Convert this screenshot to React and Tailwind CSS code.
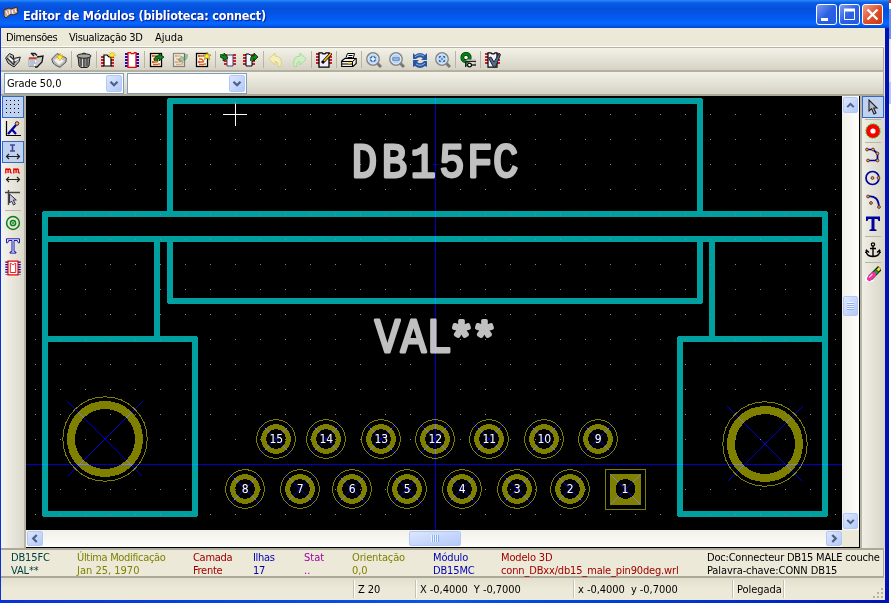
import React from "react";

const OLIVE = "#808000";
const TEAL = "#00a0a0";
const BLUE = "#0000c8";

/* ---------- icon pieces ---------- */

function Icon({ children, size = 16, className = "" }) {
  return (
    <svg width={size} height={size} viewBox="0 0 16 16" fill="none" className={`shrink-0 ${className}`}>
      {children}
    </svg>
  );
}

const RedPins = ({ x1 = 0, x2 = 13, y = 5 }) => (
  <g fill="#d02028" shapeRendering="crispEdges">
    {[0, 3, 6, 9].map((d) => (
      <React.Fragment key={d}>
        <rect x={x1} y={y + d} width="3" height="2" />
        <rect x={x2} y={y + d} width="3" height="2" />
      </React.Fragment>
    ))}
  </g>
);

const Star = ({ x = 12, y = 4 }) => (
  <g>
    <path d={`M${x - 4} ${y}h8M${x} ${y - 4}v8M${x - 2.5} ${y - 2.5}l5 5M${x + 2.5} ${y - 2.5}l-5 5`} stroke="#e0b000" />
    <circle cx={x} cy={y} r="1.8" fill="#ffee20" />
  </g>
);

const Board = ({ faded, star }) => (
  <g opacity={faded ? 0.4 : 1}>
    <rect x="1.5" y="1.5" width="11" height="13" fill="#fff" stroke="#000" strokeWidth="1.3" />
    <path d="M4 4h5M4 7h2.5l1.5 1.5M4 10h4l1-1.5M4 12.5h5M10 11v2" stroke="#e06018" strokeWidth="1.4" />
    <circle cx="4" cy="4" r="1.2" fill="#e06018" />
    <circle cx="4" cy="10" r="1.2" fill="#e06018" />
    {star && <path d="M12 .3l1.200 2.700h2.700l-2 1.800l.8 2.900L12 6.100L9.300 7.700l.8-2.900l-2-1.800h2.700z" fill="#ffee20" stroke="#806000" strokeWidth=".6" />}
  </g>
);

const GreenArrow = ({ d, head }) => (
  <g>
    <path d={d} stroke="#002800" strokeWidth="3.6" />
    <path d={head} fill="#0a8a1c" stroke="#002800" strokeWidth=".8" />
    <path d={d} stroke="#0a8a1c" strokeWidth="2.2" />
  </g>
);

const Lens = ({ children }) => (
  <>
    <path d="M11.5 11.5L15 15" stroke="#777" strokeWidth="3" />
    <circle cx="7" cy="7" r="6.2" fill="#c2dcf4" stroke="#888" strokeWidth="1.5" />
    <circle cx="7" cy="7" r="4.9" fill="#b8d5f2" stroke="#e8f4ff" strokeWidth=".7" />
    {children}
  </>
);

const topIcons = [
  [
    <>
      <path d="M.7 6L4.500 1.500L8.500 3.500V6.500L15.300 5L14 9.500L9 15L3 11Z" fill="#c4c4c4" stroke="#1c1c1c" />
      <path d="M2 6l7 7M5 4l4 4v5M9 11l4-4" stroke="#333" strokeWidth="1.2" />
      <path d="M4 6l4 3M10 9l3-2" stroke="#fff" strokeWidth="1.5" />
    </>,
    <>
      <path d="M3 1.5h4l2 2M3 1L6 4" stroke="#222" strokeWidth="1.5" />
      <path d="M1 5.5h8v9H1z" fill="#fff" stroke="#999" />
      <path d="M1 6.5h8" stroke="#c84030" strokeWidth="2" />
      <path d="M2 9h5M2 11h6M2 13h4" stroke="#6688bb" />
      <path d="M9 5l6-1l-1 6l-5 5h-2" fill="#ccc" stroke="#111" strokeWidth="1.3" />
    </>,
    <>
      <path d="M.7 7L6 1.500L9 3L15.300 6L15 10L9 15.300L5 13.500L2 11Z" fill="#bbb" stroke="#555" />
      <path d="M3 8l5-3l5 4l-5 4z" fill="#f2f2f2" />
      <Star x={9} y={5} />
    </>,
  ],
  [
    <>
      <path d="M2 4h12l-1 10l-2 1.500H5L3 14z" fill="#888" stroke="#222" />
      <path d="M5 6v8M8 6v9M11 6v8" stroke="#333" />
      <path d="M6.5 6v9" stroke="#d8d8d0" />
      <ellipse cx="8" cy="4" rx="7" ry="2.2" fill="#a8a8a0" stroke="#222" />
      <path d="M6 2q2-2 4 0" stroke="#222" />
    </>,
  ],
  [
    <>
      <RedPins x1={0} x2={10} y={4} />
      <path d="M3 3h3l2 2h2v9H3z" fill="#fff" stroke="#000" strokeWidth="1.2" />
      <Star x={11} y={3} />
    </>,
    <>
      <g fill="#1010c0" shapeRendering="crispEdges">
        {[1, 4, 7, 10, 13].map((y) => (
          <React.Fragment key={y}>
            <rect x="1" y={y} width="3" height="2" />
            <rect x="12" y={y} width="3" height="2" />
          </React.Fragment>
        ))}
      </g>
      <path d="M4 .7h2.5l1 1h2l1-1H12v14.6H4z" fill="#fff" stroke="#f00000" strokeWidth="1.3" />
    </>,
  ],
  [
    <>
      <Board />
      <GreenArrow d="M7 9V7q0-2 4-2" head="M10 2l5 3l-5 4z" />
    </>,
    <>
      <Board faded />
      <g opacity=".35"><GreenArrow d="M14 2v2q0 3-4 3" head="M10 4l-4 4l5 3z" /></g>
    </>,
    <Board star />,
  ],
  [
    <>
      <RedPins x1={4} x2={13} y={2} />
      <path d="M7 3h6v11H7z" fill="#f3f2ff" stroke="#446" />
      <GreenArrow d="M1 2v1q0 2 4 2" head="M4 1l4 5l-5 3z" />
    </>,
    <>
      <RedPins x1={0} x2={9} y={2} />
      <path d="M3 2h3l1 1h2v11H3z" fill="#f3f2ff" stroke="#000" />
      <GreenArrow d="M9 9V7q0-2 3-2" head="M11 1l4 4l-4 4z" />
    </>,
  ],
  [
    <path d="M.7 7L7 1v3q8 0 6 10.500h-3q1-5-3-5V13z" fill="#f6eeb4" stroke="#dccf88" />,
    <path d="M15.300 7L9 1v3q-8 0-6 10.500h3q-1-5 3-5V13z" fill="#cfeec4" stroke="#a8d8a0" />,
  ],
  [
    <>
      <RedPins y={1} />
      <path d="M3 .8h3l1 1h2l1-1h3v14.4H3z" fill="#eeeeff" stroke="#000" strokeWidth="1.3" />
      <path d="M15 1.500L8 9l-2 2" stroke="#000" strokeWidth="3" />
      <path d="M15 1.500L8 9" stroke="#f8b820" strokeWidth="1.8" />
    </>,
  ],
  [
    <>
      <path d="M4.500 7l2-5.500h7L12 7" fill="#fff" stroke="#000" />
      <path d="M7.500 3.500h4M6.500 5.500h5" stroke="#000" />
      <path d="M.7 9l3-2.500h11.500v5L12 14.500H.7z" fill="#eeeee6" stroke="#000" strokeWidth="1.1" />
      <path d="M1 9.500h10.500l3.500-3M1 12h10.500M11.500 9.500v5" stroke="#000" />
      <path d="M7 10.800h3" stroke="#ffe010" strokeWidth="1.6" />
    </>,
  ],
  [
    <Lens><path d="M7 4v6M4 7h6" stroke="#3264a8" strokeWidth="3.400" /><path d="M7 4.500v5M4.500 7h5" stroke="#fff" strokeWidth="1.500" /></Lens>,
    <Lens><path d="M3.5 7h7" stroke="#3264a8" strokeWidth="3" /><path d="M4.2 7h5.6" stroke="#fff" /></Lens>,
    <>
      <path d="M1 7V1l2 2q5-4 10 0l2-2v7H9l2-2Q7 4 4 7zM15 9v6l-2-1q-5 4-10 0l-2 1V8h6l-2 2q4 3 7-1z" fill="#2856a4" />
      <path d="M3 5q4-4 9-1M13 11q-4 4-9 1" stroke="#8fb8e8" />
    </>,
    <Lens><path d="M4.500 6V4.500H6M9.500 6V4.500H8M4.500 8V9.500H6M9.500 8V9.500H8" stroke="#3f70b0" strokeWidth="1.2" /><path d="M5.500 5.500l3 3M8.500 5.500l-3 3" stroke="#6d98cc" /></Lens>,
  ],
  [
    <>
      <circle cx="6" cy="5.5" r="3.7" fill="#fff" stroke="#003800" strokeWidth="3.8" />
      <circle cx="6" cy="5.5" r="3.7" stroke="#088018" strokeWidth="2.4" />
      <path d="M6 10.500v4" stroke="#088018" strokeWidth="2" />
      <path d="M6.5 8.5h9v5" stroke="#b8b8b8" strokeWidth="2" />
      <path d="M5.5 15V9.5H16" stroke="#222" />
      <path d="M11 13h5" stroke="#000" strokeWidth="1.2" />
      <circle cx="9.5" cy="13" r="1.9" fill="#fff" stroke="#000" strokeWidth="1.2" />
    </>,
  ],
  [
    <>
      <RedPins y={1} x2={12} />
      <path d="M3 .8h3l1 1h2l1-1h2v14.4H3z" fill="#f3f2ff" stroke="#000" strokeWidth="1.2" />
      <path d="M3.500 6l2.500-1l3 5l5-8.500l1.500 1l-5 12.500H8.500z" fill="#506c88" stroke="#202838" />
    </>,
  ],
];

const DoubleArrow = () => <path d="M1.500 12.5h13M4 10l-2.500 2.500L4 15M12 10l2.500 2.500L12 15" stroke="#222" strokeWidth="1.2" />;
const Joint = ({ x, y }) => <circle cx={x} cy={y} r="1.4" fill="#e8a070" stroke="#502010" strokeWidth=".8" />;

const leftIcons = {
  grid: (
    <g fill="#000" shapeRendering="crispEdges">
      {[1, 5, 9, 13].map((y) => [0, 4, 8, 12].map((x) => <rect key={`${x}-${y}`} x={x + 1} y={y} width="1" height="1" />))}
    </g>
  ),
  polar: (
    <>
      <path d="M1.5 0v14.5H16" stroke="#000" strokeWidth="1.2" />
      <path d="M3 13L11 4M7 8.500l4 4.500" stroke="#0000a0" strokeWidth="2.2" />
      <circle cx="12" cy="2.5" r="1.800" fill="#e8b890" stroke="#502010" />
    </>
  ),
  inch: (
    <>
      <path d="M5 1h5M5 7h5M7.5 1v6" stroke="#4048a0" strokeWidth="1.6" />
      <DoubleArrow />
    </>
  ),
  mm: (
    <>
      <path d="M.8 6.500V1.500M.8 2.800q1.200-1.600 2.300 0V6M3.100 2.800q1.200-1.600 2.300 0V5.500l1.300.8M8.800 6.500V1.500M8.800 2.800q1.200-1.600 2.300 0V6M11.100 2.800q1.200-1.600 2.300 0V5.500l1.500.8" stroke="#e80000" strokeWidth="1.300" />
      <DoubleArrow />
    </>
  ),
  cursor: (
    <>
      <path d="M0 2.5h15M3.5 0v15" stroke="#444" strokeWidth="1.4" />
      <path d="M4.500 4v9l2-2l2 4l1.800-1l-2-4h3z" fill="#c8c8dc" stroke="#223" strokeWidth=".9" />
    </>
  ),
  pad: (
    <g stroke="#088018">
      <circle cx="8" cy="8" r="6.4" strokeWidth="1.5" />
      <circle cx="8" cy="8" r="2.6" strokeWidth="1.5" />
      <circle cx="8" cy="8" r=".6" />
    </g>
  ),
  text: <path d="M1.500.800h13v4h-1.200l-1-2.300H9v11l2 .6v1H5v-1l2-.6v-11H3.700l-1 2.300H1.500z" fill="#f0f2ff" stroke="#0000a0" strokeWidth=".9" />,
  module: (
    <>
      <path d="M2 1.500v13M14 1.500v13" stroke="#0000b0" strokeWidth="3.400" strokeDasharray="1.2 1.3" />
      <path d="M3 1.2h10v13.6H3z" fill="#fff" stroke="#f00000" strokeWidth="1.2" />
      <path d="M5.300 3.500h1l1 1h1.400l1-1h1v9H5.300z" stroke="#f00000" strokeWidth=".9" />
    </>
  ),
};

const rightIcons = {
  arrow: <path d="M4 1v11l2.6-2.3L9 15l2-1l-2.3-5H12z" fill="#b8bcd0" stroke="#222" strokeWidth="1.1" />,
  pad: (
    <>
      <circle cx="8" cy="8" r="4.8" fill="#fff" stroke="#f80000" strokeWidth="4.4" />
      <circle cx="8" cy="8" r="7.2" stroke="#00d000" strokeDasharray="1.6 1.2" />
    </>
  ),
  line: (
    <>
      <path d="M2 2.500h6l4.500 4v5.500l-2 1.500H3" stroke="#0000a0" strokeWidth="1.7" />
      <Joint x={2} y={2.5} /><Joint x={8} y={2.5} /><Joint x={12.5} y={6.5} /><Joint x={12.5} y={13.5} /><Joint x={3} y={13.5} />
    </>
  ),
  circle: (
    <>
      <circle cx="7.5" cy="8" r="6.5" stroke="#0000a0" strokeWidth="1.7" />
      <Joint x={7.5} y={8} /><Joint x={13.5} y={8} />
    </>
  ),
  arc: (
    <>
      <path d="M3 3.500q10-1.500 11 10" stroke="#0000a0" strokeWidth="1.8" />
      <Joint x={3} y={3.5} /><Joint x={6} y={10} /><Joint x={14} y={14} />
    </>
  ),
  text: <path d="M1 .5h14V5h-1.5l-1-2h-3v10l2 .7V15h-7v-1.3l2-.7V3h-3l-1 2H1z" fill="#0000a0" />,
  anchor: (
    <>
      <circle cx="8" cy="2.4" r="1.6" stroke="#000" strokeWidth="1.3" />
      <path d="M8 4v10.5M5 6.5h6M1 8.5q.5 6 7 6t7-6M.5 11l1-2.7L4 10.5M15.5 11l-1-2.7L12 10.5" stroke="#000" strokeWidth="1.4" />
    </>
  ),
  eraser: (
    <>
      <path d="M0 12l3-3l6 6l-4 1l-5-1z" fill="#fff" />
      <path d="M15 2L5 12" stroke="#111" strokeWidth="5.400" />
      <path d="M15 2L12.500 4.500" stroke="#e8e020" strokeWidth="3" />
      <path d="M12.200 4.800L9.200 7.800" stroke="#18a030" strokeWidth="3.8" />
      <path d="M8.500 8.500L4.500 12.500" stroke="#f030a0" strokeWidth="5" strokeLinecap="round" />
      <path d="M7.500 8l-3.500 3.500" stroke="#ffc0e4" strokeWidth="1.2" />
    </>
  ),
};

function SideButton({ icon, active, tall }) {
  return (
    <div
      className={`flex h-[22px] w-[22px] shrink-0 items-center justify-center ${
        active ? "border border-[#316ac5] bg-[#c1d2ee]" : ""
      } ${tall ? "mb-px" : ""}`}
    >
      <Icon>{icon}</Icon>
    </div>
  );
}

const SideSep = () => <div className="mx-[3px] h-px shrink-0 bg-[#b8b5a6]" />;

/* ---------- small controls ---------- */

function Chevron({ dir }) {
  const d = { down: "M4 6l4 4l4-4", up: "M4 10l4-4l4 4", left: "M10 4l-4 4l4 4", right: "M6 4l4 4l-4 4" }[dir];
  return (
    <svg width="15" height="15" viewBox="0 0 16 16" fill="none">
      <path d={d} stroke="#4d6185" strokeWidth="2.6" />
    </svg>
  );
}

const xpButton =
  "flex shrink-0 items-center justify-center rounded-[2px] border border-[#b4c8f6] bg-linear-to-br from-[#dce7ff] to-[#b4c9f8]";

function Combo({ value }) {
  return (
    <div className="flex h-[21px] w-[120px] items-center justify-between border border-[#7f9db9] bg-white pr-px pl-[2px]">
      <span className="text-[11px] tracking-[-0.1px]">{value}</span>
      <div className={`${xpButton} h-[17px] w-[16px]`}>
        <Chevron dir="down" />
      </div>
    </div>
  );
}

function CaptionButton({ red, children }) {
  return (
    <div
      className={`flex h-[21px] w-[21px] items-center justify-center rounded-[3px] border border-white ${
        red ? "bg-linear-to-br from-[#f0a088] via-[#e0502c] to-[#c83810]" : "bg-linear-to-br from-[#7c9cf4] via-[#2c60e4] to-[#2458e0]"
      }`}
    >
      <svg width="19" height="19" viewBox="0 0 19 19" fill="none" stroke="#fff">
        {children}
      </svg>
    </div>
  );
}

/* ---------- drawing area ---------- */

const holes = [
  [105, 439],
  [765, 444],
];
const pads = [
  [276, 439, "15"], [326, 439, "14"], [381, 439, "13"], [435, 439, "12"], [489, 439, "11"], [544, 439, "10"], [598, 439, "9"],
  [245, 489, "8"], [300, 489, "7"], [352, 489, "6"], [407, 489, "5"], [462, 489, "4"], [517, 489, "3"], [570, 489, "2"],
];

const cross = (x, y, r) => `M${x - r} ${y - r}L${x + r} ${y + r}M${x + r} ${y - r}L${x - r} ${y + r}`;

function Footprint() {
  const dots = [];
  for (let y = 114; y < 530; y += 25) {
    for (let x = 35; x < 842; x += 25) {
      if (x !== 435 && y !== 464) dots.push(`M${x} ${y}h1v1h-1z`);
    }
  }
  return (
    <svg width="816" height="434" viewBox="26 96 816 434" className="block shrink-0 bg-black" fill="none">
      <g shapeRendering="crispEdges">
        <path
          d="M170 214V101H700V214M45 214H825V514H680V339H825M45 214V514H195V339H45M45 239H825M170 239V301H700V239M157 239V339M712 239V339"
          stroke={TEAL}
          strokeWidth="6"
          strokeLinejoin="round"
          strokeLinecap="round"
        />
        {holes.map(([x, y]) => (
          <g key={x} stroke={OLIVE}>
            <circle cx={x} cy={y} r="34" strokeWidth="8" />
            <circle cx={x} cy={y} r="42.2" />
          </g>
        ))}
        {pads.map(([x, y, n]) => (
          <g key={n} stroke={OLIVE}>
            <circle cx={x} cy={y} r="12.4" strokeWidth="5" />
            <circle cx={x} cy={y} r="19.3" />
          </g>
        ))}
        <rect x="605.5" y="469.5" width="40" height="40" stroke={OLIVE} />
        <rect x="610" y="474" width="31" height="31" fill={OLIVE} />
        <circle cx="625.5" cy="489" r="10" fill="#000" />
        <path d={dots.join("")} fill="#848484" />
      </g>

      <g fill="#c0c0c0" stroke="#c0c0c0" strokeLinejoin="round" fontFamily="'Liberation Mono', monospace">
        <g transform="scale(.88 1)" fontSize="48" strokeWidth="2.8">
          <text x="399.8 433.9 466.6 499.2 531 560.2" y="177.400">DB15FC</text>
          <text x="425.9 455.5 484.8" y="352.300">VAL</text>
        </g>
        <text x="453.2 476.2" y="350" fontSize="42" strokeWidth="4" fontFamily="'Liberation Sans', sans-serif">**</text>
      </g>

      <g stroke={BLUE} shapeRendering="crispEdges" className="mix-blend-screen">
        <path d="M26 464.5H842M435.5 97V530" />
        <path d="M433 164.5h5" />
        {holes.map(([x, y]) => (
          <path key={x} d={cross(x, y, 37.5)} />
        ))}
        {pads.map(([x, y, n]) => (
          <path key={n} d={cross(x, y, 15)} />
        ))}
        <path d={cross(625.5, 489.5, 15)} />
      </g>

      <g fill="#fff" fontFamily="'DejaVu Sans', sans-serif" fontSize="12" textAnchor="middle">
        {pads.map(([x, y, n]) => (
          <text key={n} x={x + 0.3} y={y + 4}>{n}</text>
        ))}
        <text x="625" y="493">1</text>
      </g>

      <g shapeRendering="crispEdges">
        <path d="M223 114.5h24M235.5 102v24" stroke="#fff" />
        <path d="M235.5 102v2" stroke="#ff5f5f" />
      </g>
    </svg>
  );
}

/* ---------- information rows ---------- */

const info = [
  ["w-[66px] tracking-[-0.15px]", "text-[#004040]", "DB15FC", "VAL**"],
  ["w-[116px]", "text-[#808000]", "Última Modificação", "Jan 25, 1970", "tracking-[-0.33px]"],
  ["w-[60px] tracking-[-0.3px]", "text-[#a00000]", "Camada", "Frente"],
  ["w-[51px] tracking-[-0.3px]", "text-[#0000b4]", "Ilhas", "17"],
  ["w-[48px]", "text-[#a000a0]", "Stat", ".."],
  ["w-[81px] tracking-[-0.15px]", "text-[#808000]", "Orientação", "0,0"],
  ["w-[68px] tracking-[-0.15px]", "text-[#0000b4]", "Módulo", "DB15MC"],
  ["w-[206px] tracking-[-0.16px]", "text-[#a00000]", "Modelo 3D", "conn_DBxx/db15_male_pin90deg.wrl"],
  ["w-[176px] tracking-[-0.1px]", "text-black", "Doc:Connecteur DB15 MALE couche", "Palavra-chave:CONN DB15", "tracking-[-0.2px]"],
];

const status = [
  ["w-[353px]", ""],
  ["w-[62px]", "Z 20"],
  ["w-[158px]", "X -0,4000  Y -0,7000"],
  ["w-[159px]", "x -0,4000  y -0,7000"],
  ["w-[51px]", "Polegada"],
];

export default function App() {
  return (
    <div className="flex h-[603px] w-[891px] overflow-hidden bg-white font-['DejaVu_Sans_Condensed','DejaVu_Sans',sans-serif] text-[11px] leading-[13px] text-black [font-stretch:condensed]">
      <div className="flex h-full w-[889px] shrink-0 flex-col bg-linear-to-r from-[#0831d9] via-[#0855e8] to-[#0010b8]">
        <header className="flex h-[28px] shrink-0 items-center justify-between bg-[linear-gradient(180deg,#2a8cf8_0%,#0a5ce8_10%,#0450dc_30%,#0458ec_60%,#0668ff_85%,#0344d0_100%)] pt-[2px] pr-[6px] pl-[3px]">
          <div className="flex items-center gap-1">
            <Icon className="-mt-1">
              <path d="M1 5L6 3L8 4L14 2L15 8L10 10L8 9L3 13L1 11Z" fill="#c8a890" stroke="#402820" />
              <path d="M3 6l2 4M6 5l1 4M9 5l1 4M12 4l1 3" stroke="#fff" />
            </Icon>
            <h1 className="text-[12.5px] font-bold tracking-[-0.19px] whitespace-nowrap text-white [text-shadow:1px_1px_1px_#0a1883]">
              Editor de Módulos (biblioteca: connect)
            </h1>
          </div>
          <div className="-mt-px flex gap-[2px]">
            <CaptionButton><path d="M4 14.5h7" strokeWidth="3" /></CaptionButton>
            <CaptionButton>
              <path d="M4.5 4v10.5h10V4" />
              <path d="M4 5h11" strokeWidth="3" />
            </CaptionButton>
            <CaptionButton red><path d="M4.5 4.5l10 10M14.5 4.5l-10 10" strokeWidth="2.4" /></CaptionButton>
          </div>
        </header>

        <div className="mr-[4px] ml-px flex h-[572px] shrink-0 flex-col bg-[#ece9d8]">
          <nav className="flex h-[19px] shrink-0 items-center pl-[5px] whitespace-nowrap">
            <span className="w-[63px] tracking-[-0.4px]">Dimensões</span>
            <span className="w-[86px] tracking-[-0.3px]">Visualização 3D</span>
            <span>Ajuda</span>
          </nav>

          <div className="mr-px flex h-[25px] shrink-0 items-center border-t border-r border-b-2 border-t-[#b4b1a0] border-r-[#aca899] border-b-[#b4b1a0] bg-linear-to-b from-[#f3f2e8] to-[#d6d3c5] shadow-[0_-1px_0_#fff]">
            <div className="flex pt-px pl-px">
              {topIcons.map((group, g) => (
                <div key={g} className="flex">
                  {g > 0 && <div className="-mt-px mr-px h-[17px] w-px bg-[#b8b5a6]" />}
                  {group.map((icon, i) => (
                    <div key={i} className="flex w-[23px] pl-[3px]">
                      <Icon>{icon}</Icon>
                    </div>
                  ))}
                </div>
              ))}
            </div>
          </div>

          <div className="mr-px flex h-[24px] shrink-0 items-center gap-[3px] border-r border-b-2 border-r-[#aca899] border-b-[#aca899] bg-linear-to-b from-[#f3f2e8] to-[#d6d3c5] pl-[3px]">
            <Combo value="Grade 50,0" />
            <Combo value="" />
          </div>

          <div className="flex h-[452px] shrink-0">
            <aside className="flex w-[25px] shrink-0 flex-col border-r-2 border-[#b8b5a6] bg-linear-to-r from-[#f5f4ec] to-[#dcd9cc] pl-px">
              <SideButton icon={leftIcons.grid} active />
              <SideButton icon={leftIcons.polar} tall />
              <SideButton icon={leftIcons.inch} active tall />
              <SideButton icon={leftIcons.mm} tall />
              <SideButton icon={leftIcons.cursor} tall />
              <SideSep />
              <div className="h-px" />
              <SideButton icon={leftIcons.pad} tall />
              <SideButton icon={leftIcons.text} />
              <SideButton icon={leftIcons.module} />
            </aside>

            <main className="flex w-[834px] shrink-0 flex-col border-r border-b border-black">
              <div className="flex">
                <Footprint />
                <div className="flex w-[17px] flex-col items-center bg-linear-to-r from-[#f1f0ea] to-[#fefefb] pt-px">
                  <div className={`${xpButton} h-[16px] w-[15px]`}><Chevron dir="up" /></div>
                  <div className={`${xpButton} mt-[183px] h-[20px] w-[15px] flex-col`}>
                    <i className="h-px w-[7px] bg-[#eef4fe]" />
                    <i className="h-px w-[7px] bg-[#8cb0f8]" />
                    <i className="h-px w-[7px] bg-[#eef4fe]" />
                    <i className="h-px w-[7px] bg-[#8cb0f8]" />
                    <i className="h-px w-[7px] bg-[#eef4fe]" />
                    <i className="h-px w-[7px] bg-[#8cb0f8]" />
                    <i className="h-px w-[7px] bg-[#eef4fe]" />
                    <i className="h-px w-[7px] bg-[#8cb0f8]" />
                  </div>
                  <div className={`${xpButton} mt-auto mb-px h-[16px] w-[15px]`}><Chevron dir="down" /></div>
                </div>
              </div>
              <div className="flex h-[17px]">
                <div className="flex w-[816px] items-center justify-between bg-linear-to-b from-[#f1f0ea] to-[#fefefb] pl-px">
                  <div className={`${xpButton} h-[15px] w-[16px]`}><Chevron dir="left" /></div>
                  <div className={`${xpButton} h-[15px] w-[52px]`}>
                    <i className="h-[7px] w-px bg-[#eef4fe]" />
                    <i className="h-[7px] w-px bg-[#8cb0f8]" />
                    <i className="h-[7px] w-px bg-[#eef4fe]" />
                    <i className="h-[7px] w-px bg-[#8cb0f8]" />
                    <i className="h-[7px] w-px bg-[#eef4fe]" />
                    <i className="h-[7px] w-px bg-[#8cb0f8]" />
                    <i className="h-[7px] w-px bg-[#eef4fe]" />
                    <i className="h-[7px] w-px bg-[#8cb0f8]" />
                  </div>
                  <div className={`${xpButton} h-[15px] w-[16px]`}><Chevron dir="right" /></div>
                </div>
                <div className="w-[17px] bg-[#ece9d8]" />
              </div>
            </main>

            <aside className="flex w-[25px] shrink-0 flex-col border-l-2 border-[#b8b5a6] bg-linear-to-r from-[#f0efe6] to-[#d8d5c7] pr-px">
              <SideButton icon={rightIcons.arrow} active />
              <div className="h-px" />
              <SideSep />
              <SideButton icon={rightIcons.pad} />
              <SideSep />
              <div className="h-px" />
              <SideButton icon={rightIcons.line} tall />
              <SideButton icon={rightIcons.circle} tall />
              <SideButton icon={rightIcons.arc} tall />
              <SideButton icon={rightIcons.text} tall />
              <SideSep />
              <div className="h-[2px]" />
              <SideButton icon={rightIcons.anchor} tall />
              <SideSep />
              <SideButton icon={rightIcons.eraser} />
            </aside>
          </div>

          <section className="mr-px flex h-[30px] shrink-0 border-t-2 border-r border-b-2 border-[#aca899] pl-[10px]">
            {info.map(([w, color, top, bottom, topSpacing = ""]) => (
              <div key={top} className={`${w} ${color} shrink-0 pt-px whitespace-nowrap`}>
                <div className={topSpacing}>{top}</div>
                <div>{bottom}</div>
              </div>
            ))}
          </section>

          <footer className="flex h-[22px] shrink-0 items-center bg-linear-to-b from-[#e2dfcd] via-[#ece9d8] to-[#ece9d8]">
            {status.map(([w, label]) => (
              <div key={w} className={`${w} flex h-[18px] shrink-0 items-center border-r border-[#c5c2b0] pt-px pl-[4px] tracking-[-0.05px] whitespace-pre shadow-[1px_0_0_#fff]`}>
                {label}
              </div>
            ))}
            <svg width="14" height="14" className="mt-auto ml-auto" fill="#b8b4a2" shapeRendering="crispEdges">
              <path d="M10 2h2v2h-2zM6 6h2v2H6zM10 6h2v2h-2zM2 10h2v2H2zM6 10h2v2H6zM10 10h2v2h-2z" />
            </svg>
          </footer>
        </div>
      </div>
      <div className="flex w-[2px] shrink-0 flex-col">
        <div className="h-[3px] bg-[#e03010]" />
        <div className="h-[6px] bg-white" />
        <div className="h-[30px] bg-[#6f8fe0]" />
        <div className="h-[43px] bg-[#ece9d8]" />
        <div className="h-[22px] bg-[#b8c8ee]" />
        <div className="flex-1 bg-white" />
      </div>
    </div>
  );
}
